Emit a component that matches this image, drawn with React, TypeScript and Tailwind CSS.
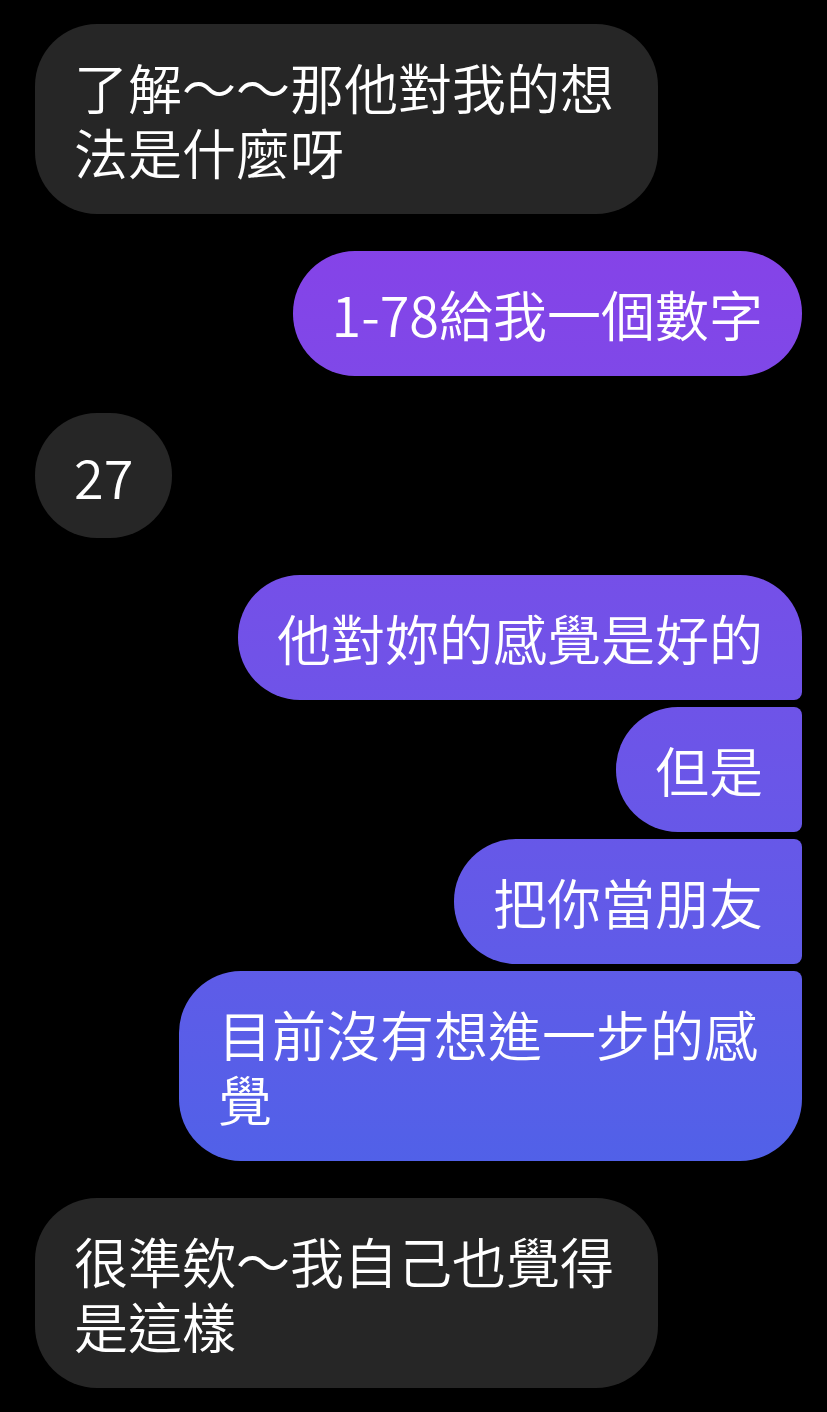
const font = { fontFamily: '"Noto Sans CJK TC", "Noto Sans", sans-serif' }

type Msg = { text: string; mine: boolean }

// groups of consecutive messages from the same sender
const groups: Msg[][] = [
  [{ text: "了解～～那他對我的想法是什麼呀", mine: false }],
  [{ text: "1-78給我一個數字", mine: true }],
  [{ text: "27", mine: false }],
  [
    { text: "他對妳的感覺是好的", mine: true },
    { text: "但是", mine: true },
    { text: "把你當朋友", mine: true },
    { text: "目前沒有想進一步的感覺", mine: true },
  ],
  [{ text: "很準欸～我自己也覺得是這樣", mine: false }],
]

function cornerClass(mine: boolean, i: number, n: number) {
  if (!mine || n === 1) return "rounded-[62px]"
  if (i === 0) return "rounded-[62px] rounded-br-[8px]"
  if (i === n - 1) return "rounded-[62px] rounded-tr-[8px]"
  return "rounded-[62px] rounded-tr-[8px] rounded-br-[8px]"
}

export default function App() {
  return (
    <div className="min-h-screen w-full bg-black pt-[24px] pb-[22px] pl-[35px] pr-[25px]" style={font}>
      <div className="flex flex-col gap-[37px]">
        {groups.map((g, gi) => (
          <div key={gi} className={`flex flex-col gap-[7px] ${g[0].mine ? "items-end" : "items-start"}`}>
            {g.map((m, i) => (
              <div
                key={i}
                className={`max-w-[623px] px-[39px] py-[30px] text-[54px] leading-[65px] font-[350] text-white break-all ${cornerClass(
                  m.mine,
                  i,
                  g.length
                )} ${m.mine ? "bg-fixed bg-linear-to-b from-[#9037e8] to-[#3a67e8]" : "bg-[#262626]"}`}
              >
                {m.text}
              </div>
            ))}
          </div>
        ))}
      </div>
    </div>
  )
}
